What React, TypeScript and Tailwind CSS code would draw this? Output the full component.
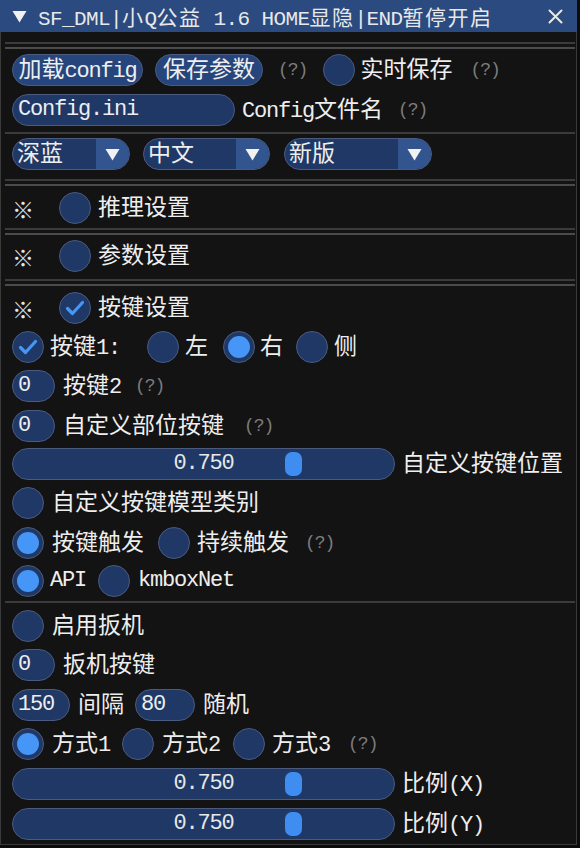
import type { ReactNode } from 'react';

// wide (CJK / symbol) runs are set larger than the half-width latin, like the ImGui font atlas
const WIDE = /([\u2000-\u2bff\u3000-\u9fff\uff00-\uffef]+)/;

function Txt({
  s,
  cjk = 'text-[23px]',
  latin = 'text-[22px] tracking-[-1.2px]',
}: {
  s: string;
  cjk?: string;
  latin?: string;
}) {
  return (
    <>
      {s.split(WIDE).map((part, i) =>
        !part ? null : i % 2 === 1 ? (
          <span key={i} className={`font-['Noto_Sans_CJK_SC',sans-serif] ${cjk}`}>
            {part}
          </span>
        ) : (
          <span key={i} className={latin}>
            {part}
          </span>
        ),
      )}
    </>
  );
}

const frame = 'h-[32px] shrink-0 rounded-full border border-[#4b5a7d] bg-[#1f3866]';

function Label({ s, className = '' }: { s: string; className?: string }) {
  return (
    <span className={`whitespace-nowrap leading-[32px] text-[#eeeeee] ${className}`}>
      <Txt s={s} />
    </span>
  );
}

function Help({ className = '' }: { className?: string }) {
  return (
    <span className={`whitespace-nowrap text-[18px] leading-[32px] tracking-[-1px] text-[#7c7c7c] ${className}`}>
      (?)
    </span>
  );
}

function Row({ children, className = 'mt-[7px]' }: { children: ReactNode; className?: string }) {
  return <div className={`flex h-[32px] items-center ${className}`}>{children}</div>;
}

function Sep({ double, className }: { double?: boolean; className: string }) {
  return (
    <div className={`-ml-[7px] -mr-[10px] ${className}`}>
      <div className="h-[2px] bg-[#3b3b3b]" />
      {double && <div className="mt-[3px] h-[2px] bg-[#4b4b4b]" />}
    </div>
  );
}

function Button({ text, w }: { text: string; w: string }) {
  return (
    <div className={`flex items-center justify-center bg-[#25457c] leading-[30px] text-[#eeeeee] ${frame} ${w}`}>
      <span>
        <Txt s={text} />
      </span>
    </div>
  );
}

function Input({ value, w }: { value: string; w: string }) {
  return (
    <div className={`flex items-center pl-[5px] text-[#eeeeee] ${frame} ${w}`}>
      <span className="text-[22px] leading-[30px] tracking-[-1.2px]">{value}</span>
    </div>
  );
}

function Arrow() {
  return (
    <svg width="15" height="13" viewBox="0 0 15 13">
      <path d="M0.5 1h14L7.5 12.5z" fill="#f2f2f2" />
    </svg>
  );
}

function Combo({ value, w }: { value: string; w: string }) {
  return (
    <div className={`flex items-center text-[#eeeeee] ${frame} ${w}`}>
      <span className="flex-1 pl-[4px] leading-[30px]">
        <Txt s={value} />
      </span>
      <span className="flex h-full w-[33px] items-center justify-center rounded-r-[15px] bg-[#33558f]">
        <Arrow />
      </span>
    </div>
  );
}

function Check({ on, className = '' }: { on?: boolean; className?: string }) {
  return (
    <span className={`flex w-[32px] items-center justify-center ${frame} ${className}`}>
      {on && (
        <svg width="22" height="22" viewBox="0 0 22 22">
          <path
            d="M3.5 11.5l5 5L18.5 5.5"
            fill="none"
            stroke="#4596f7"
            strokeWidth="3.2"
            strokeLinecap="round"
            strokeLinejoin="round"
          />
        </svg>
      )}
    </span>
  );
}

function Radio({ on, className = '' }: { on?: boolean; className?: string }) {
  return (
    <span className={`flex w-[32px] items-center justify-center ${frame} ${className}`}>
      {on && <span className="h-[22px] w-[22px] rounded-full bg-[#4596f7]" />}
    </span>
  );
}

function Slider({ value, label, className }: { value: number; label: string; className?: string }) {
  return (
    <Row className={className}>
      <div className={`relative flex w-[383px] items-center justify-center ${frame} bg-[#1c3564]`}>
        <span
          className="absolute top-[3px] h-[24px] w-[17px] rounded-[7px] bg-[#3f8df0]"
          style={{ left: Math.round(value * 363) }}
        />
        <span className="relative text-[22px] leading-[30px] tracking-[-1.2px] text-[#e8e8e8]">
          {value.toFixed(3)}
        </span>
      </div>
      <Label s={label} className="ml-[7px]" />
    </Row>
  );
}

function Header({ text, on, className }: { text: string; on?: boolean; className: string }) {
  return (
    <Row className={className}>
      <span className="w-[23px] font-['Noto_Sans_CJK_SC',sans-serif] text-[22px] leading-[32px] text-[#e6e6e6]">※</span>
      <Check on={on} className="ml-[24px]" />
      <Label s={text} className="ml-[7px]" />
    </Row>
  );
}

export default function App() {
  return (
    <div className="h-[848px] w-[580px] bg-[#0c0c0c] font-['Liberation_Mono','Noto_Sans_CJK_SC',monospace] leading-none">
      <div className="h-[845px] w-[577px] border-x border-b border-[#3a3a3a] bg-[#131313]">
        <div className="-mx-px flex h-[32px] items-center bg-[#2a4a80] pl-[12px] pr-[10px] text-[#e8e8e8]">
          <Arrow />
          <span className="ml-[11px] mt-[3px] whitespace-nowrap leading-none">
            <Txt
              s="SF_DML|小Q公益 1.6 HOME显隐|END暂停开启"
              cjk="text-[21px] tracking-[1.5px]"
              latin="text-[21px] tracking-[-0.6px]"
            />
          </span>
          <svg className="ml-auto mr-[4px]" width="15" height="15" viewBox="0 0 15 15">
            <path d="M1.5 1.5l12 12M13.5 1.5l-12 12" stroke="#e8e8e8" strokeWidth="2" strokeLinecap="round" />
          </svg>
        </div>

        <div className="px-[11px]">
          <Sep double className="mt-[10px]" />

          <Row className="mt-[5px]">
            <Button text="加载config" w="w-[131px]" />
            <span className="ml-[12px]">
              <Button text="保存参数" w="w-[108px]" />
            </span>
            <Help className="ml-[15px]" />
            <Check className="ml-[16px]" />
            <Label s="实时保存" className="ml-[5px]" />
            <Help className="ml-[18px]" />
          </Row>

          <Row className="mt-[8px]">
            <Input value="Config.ini" w="w-[223px]" />
            <Label s="Config文件名" className="ml-[7px]" />
            <Help className="ml-[15px]" />
          </Row>

          <Sep className="mt-[6px]" />

          <Row className="mt-[4px]">
            <Combo value="深蓝" w="w-[118px]" />
            <span className="ml-[13px]">
              <Combo value="中文" w="w-[127px]" />
            </span>
            <span className="ml-[14px]">
              <Combo value="新版" w="w-[148px]" />
            </span>
          </Row>

          <Sep double className="mt-[9px]" />
          <Header text="推理设置" className="mt-[6px]" />
          <Sep double className="mt-[4px]" />
          <Header text="参数设置" className="mt-[5px]" />
          <Sep double className="mt-[7px]" />
          <Header text="按键设置" on className="mt-[6px]" />

          <Row>
            <Check on />
            <Label s="按键1:" className="ml-[6px]" />
            <Radio className="ml-[27px]" />
            <Label s="左" className="ml-[6px]" />
            <Radio on className="ml-[15px]" />
            <Label s="右" className="ml-[5px]" />
            <Radio className="ml-[13px]" />
            <Label s="侧" className="ml-[6px]" />
          </Row>

          <Row>
            <Input value="0" w="w-[43px]" />
            <Label s="按键2" className="ml-[8px]" />
            <Help className="ml-[14px]" />
          </Row>

          <Row className="mt-[8px]">
            <Input value="0" w="w-[43px]" />
            <Label s="自定义部位按键" className="ml-[8px]" />
            <Help className="ml-[20px]" />
          </Row>

          <Slider value={0.75} label="自定义按键位置" className="mt-[6px]" />

          <Row>
            <Check />
            <Label s="自定义按键模型类别" className="ml-[8px]" />
          </Row>

          <Row className="mt-[8px]">
            <Radio on />
            <Label s="按键触发" className="ml-[8px]" />
            <Radio className="ml-[14px]" />
            <Label s="持续触发" className="ml-[7px]" />
            <Help className="ml-[16px]" />
          </Row>

          <Row className="mt-[6px]">
            <Radio on />
            <Label s="API" className="ml-[6px]" />
            <Radio className="ml-[12px]" />
            <Label s="kmboxNet" className="ml-[8px]" />
          </Row>

          <Sep className="mt-[4px]" />

          <Row>
            <Check />
            <Label s="启用扳机" className="ml-[8px]" />
          </Row>

          <Row className="mt-[7px]">
            <Input value="0" w="w-[43px]" />
            <Label s="扳机按键" className="ml-[8px]" />
          </Row>

          <Row className="mt-[8px]">
            <Input value="150" w="w-[58px]" />
            <Label s="间隔" className="ml-[8px]" />
            <span className="ml-[11px]">
              <Input value="80" w="w-[60px]" />
            </span>
            <Label s="随机" className="ml-[8px]" />
          </Row>

          <Row>
            <Radio on />
            <Label s="方式1" className="ml-[8px]" />
            <Radio className="ml-[12px]" />
            <Label s="方式2" className="ml-[8px]" />
            <Radio className="ml-[13px]" />
            <Label s="方式3" className="ml-[7px]" />
            <Help className="ml-[18px]" />
          </Row>

          <Slider value={0.75} label="比例(X)" className="mt-[8px]" />
          <Slider value={0.75} label="比例(Y)" className="mt-[8px]" />
        </div>
      </div>
    </div>
  );
}
